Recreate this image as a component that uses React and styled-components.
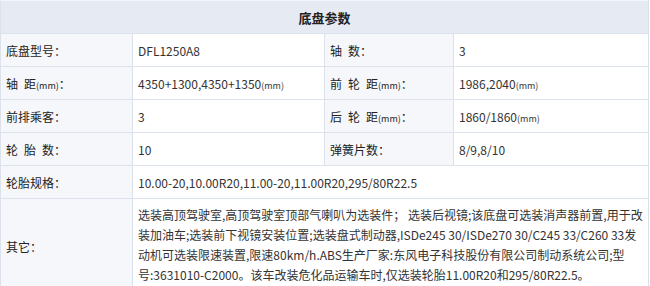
import styled, { createGlobalStyle } from "styled-components";

const GlobalStyle = createGlobalStyle`
  body {
    margin: 0;
    background: #fff;
    font-family: "Noto Sans CJK SC", "Liberation Sans", sans-serif;
    color: #333;
  }
`;

const specs = [
  [
    { label: "底盘型号：", value: "DFL1250A8" },
    { label: "轴\u2002数：", value: "3" },
  ],
  [
    { label: "轴\u2002距", unit: true, value: "4350+1300,4350+1350", valueUnit: true },
    { label: "前\u2002轮\u2002距", unit: true, value: "1986,2040", valueUnit: true },
  ],
  [
    { label: "前排乘客：", value: "3" },
    { label: "后\u2002轮\u2002距", unit: true, value: "1860/1860", valueUnit: true },
  ],
  [
    { label: "轮\u2002胎\u2002数：", value: "10" },
    { label: "弹簧片数：", value: "8/9,8/10" },
  ],
];

const otherLines = [
  "选装高顶驾驶室,高顶驾驶室顶部气喇叭为选装件； 选装后视镜;该底盘可选装消声器前置,用于改",
  "装加油车;选装前下视镜安装位置;选装盘式制动器,ISDe245 30/ISDe270 30/C245 33/C260 33发",
  "动机可选装限速装置,限速80km/h.ABS生产厂家:东风电子科技股份有限公司制动系统公司;型",
  "号:3631010-C2000。该车改装危化品运输车时,仅选装轮胎11.00R20和295/80R22.5。",
];

const Label = ({ item }) =>
  item.unit ? (
    <>
      {item.label}
      <Unit>(mm)</Unit>：
    </>
  ) : (
    item.label
  );

const Value = ({ item }) => (
  <>
    {item.value}
    {item.valueUnit && <Unit>(mm)</Unit>}
  </>
);

const App = () => {
  return (
    <>
      <GlobalStyle />
      <Table>
        <colgroup>
          <col style={{ width: 132 }} />
          <col style={{ width: 192 }} />
          <col style={{ width: 129 }} />
          <col style={{ width: 195 }} />
        </colgroup>
        <tbody>
          <Row>
            <HeadCell colSpan={4}>底盘参数</HeadCell>
          </Row>
          {specs.map((pair, i) => (
            <Row key={i}>
              {pair.map((item, j) => [
                <LabelCell key={`l${j}`}>
                  <Label item={item} />
                </LabelCell>,
                <ValueCell key={`v${j}`}>
                  <Value item={item} />
                </ValueCell>,
              ])}
            </Row>
          ))}
          <Row>
            <LabelCell>轮胎规格：</LabelCell>
            <ValueCell colSpan={3}>
              10.00-20,10.00R20,11.00-20,11.00R20,295/80R22.5
            </ValueCell>
          </Row>
          <Row>
            <LabelCell>其它：</LabelCell>
            <ValueCell colSpan={3} $multi>
              {otherLines.map((line, i) => (
                <Line key={i}>{line}</Line>
              ))}
            </ValueCell>
          </Row>
        </tbody>
      </Table>
    </>
  );
};

export default App;

const Table = styled.table`
  width: 648px;
  table-layout: fixed;
  border-collapse: collapse;
  font-size: 12px;
`;

const Row = styled.tr`
  height: 33px;
`;

const Cell = styled.td`
  border: 1px solid #dbe2ec;
  padding: 0 5px;
  white-space: nowrap;
  vertical-align: middle;
`;

const HeadCell = styled(Cell)`
  background: #e6ebf3;
  text-align: center;
  font-weight: bold;
  font-size: 13px;
  color: #222;
  border-top-color: #f2f5f9;
`;

const LabelCell = styled(Cell)`
  background: #f5f7fa;
  font-size: 12px;
  color: #222;
`;

const ValueCell = styled(Cell)`
  background: #fff;
  padding: ${(p) => (p.$multi ? "6px 5px 8px" : "0 5px")};
`;

const Line = styled.div`
  line-height: 20px;
  white-space: nowrap;
`;

const Unit = styled.span`
  font-size: 9px;
`;
